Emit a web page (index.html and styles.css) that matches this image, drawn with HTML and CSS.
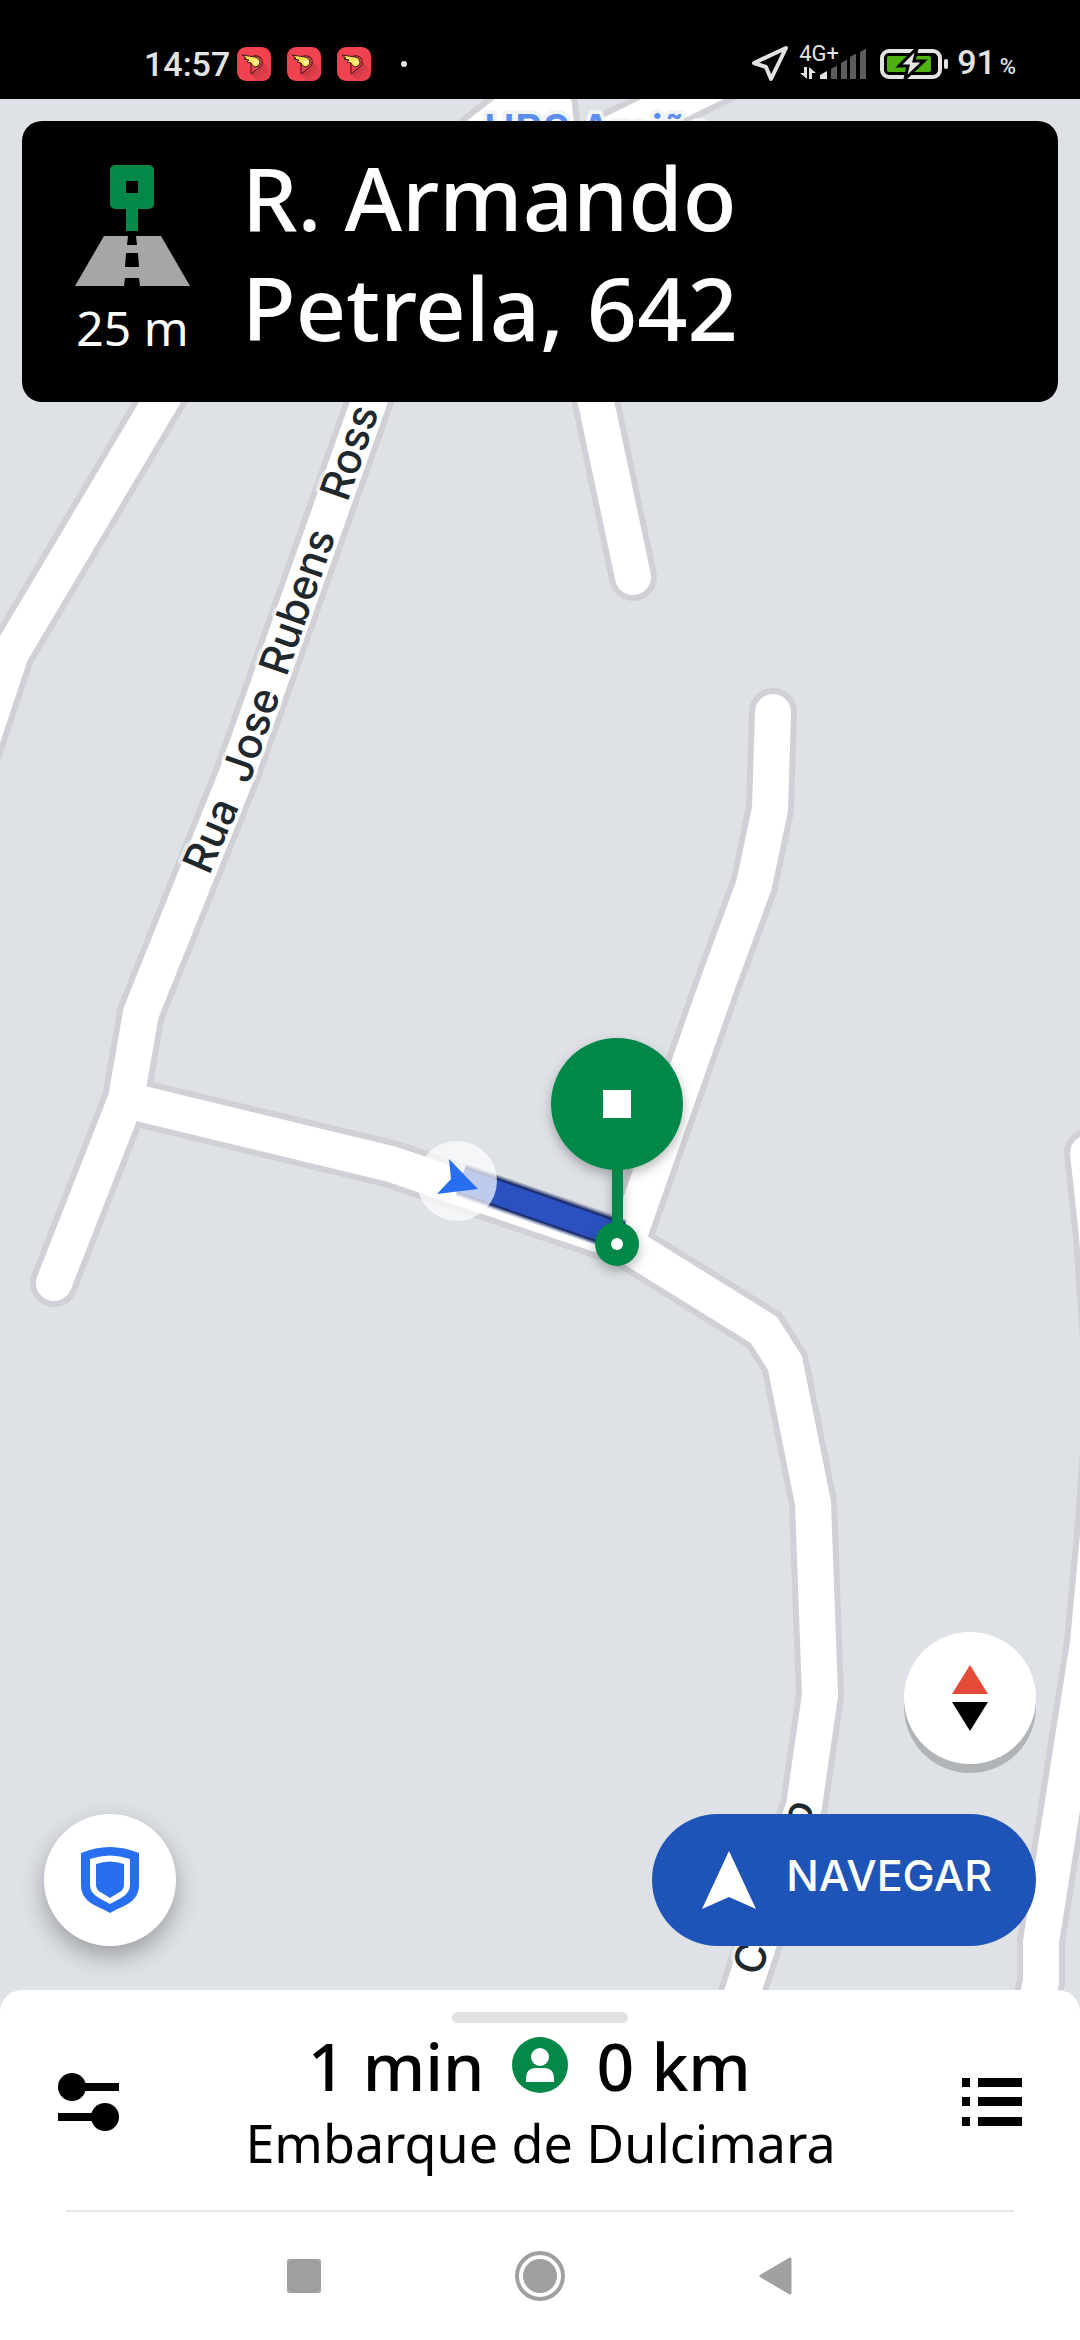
FILE: index.html
```html
<!DOCTYPE html>
<html lang="pt-BR">
<head>
<meta charset="utf-8">
<meta name="viewport" content="width=device-width, initial-scale=1">
<title>Navegação</title>
<link rel="stylesheet" href="styles.css">
</head>
<body>
<svg width="0" height="0" class="defs" aria-hidden="true">
  <defs>
    <linearGradient id="fade" x1="0" y1="0" x2="1" y2="1">
      <stop offset="0.2" stop-color="#a3303a"/>
      <stop offset="0.9" stop-color="#f0424f"/>
    </linearGradient>
    <symbol id="app" viewBox="0 0 34 34">
      <rect width="34" height="34" rx="9" fill="#f0424f"/>
      <path d="M23 12 L34 23 V27 Q33 34 25 34 H21 L14 27 Z" fill="url(#fade)" opacity="0.7"/>
      <path d="M14 13 V27 L24 19 Q27 14 23 10 Q20 8 16 9" fill="#f0424f" stroke="#37171b" stroke-width="1"/>
      <path d="M5 8 L18 10 Q23 11 23 16 Q22 20 18 20 Q15 19 14 16 L10 15 L12 13 L7 12 L9 11 Z" fill="#ffe55c" stroke="#37171b" stroke-width="1"/>
      <circle cx="19" cy="15" r="2" fill="#fff6a0"/>
    </symbol>
  </defs>
</svg>

<header class="status">
  <div class="status-left">
    <time class="clock">14:57</time>
    <div class="apps">
      <svg width="34" height="34"><use href="#app"/></svg>
      <svg width="34" height="34"><use href="#app"/></svg>
      <svg width="34" height="34"><use href="#app"/></svg>
    </div>
    <span class="more-dot"></span>
  </div>
  <div class="status-right">
    <svg class="locate" width="38" height="38" viewBox="0 0 38 38"><path d="M35 3 L3 18 L15 22 L20 34 Z" fill="none" stroke="#e3e3e3" stroke-width="4" stroke-linejoin="round"/></svg>
    <div class="signal">
      <span class="net">4G+</span>
      <svg width="68" height="32" viewBox="0 0 68 32">
        <g fill="#e3e3e3">
          <path d="M5 19h3v12l-7-6h4zM10 31v-12l7 6h-4v6z"/>
          <path d="M21 31v-4l7-4v8z"/>
        </g>
        <g fill="#5c5c5c">
          <path d="M32 31V21l5-3h1v13zM42 31V15l5-3h1v19zM51 31V9l5-3h1v25zM61 31V4l5-3h1v30z"/>
        </g>
      </svg>
    </div>
    <svg class="battery" width="69" height="32" viewBox="0 0 69 32">
      <rect x="2" y="3" width="58" height="26" rx="7" fill="none" stroke="#e3e3e3" stroke-width="4"/>
      <rect x="7" y="8" width="44" height="16" rx="2" fill="#4eb011"/>
      <rect x="64" y="11" width="4" height="10" rx="2" fill="#e3e3e3"/>
      <path d="M36 1 L19 18 H28 L25 31 L44 13 H34 L37 1 Z" fill="#e3e3e3" stroke="#000" stroke-width="3"/>
    </svg>
    <span class="percent">91<small>%</small></span>
  </div>
</header>

<main class="map">
  <svg class="tiles" viewBox="0 99 1080 1915" preserveAspectRatio="xMidYMin slice" role="img" aria-label="Mapa">
    <defs>
      <g id="roads">
        <path d="M172 382 L11 653 L-89 953"/>
        <path d="M376 382 L237 774 L141 1013 L126 1099 L54 1283"/>
        <path d="M126 1100 L391 1164 L624 1243 L764 1330 L785 1363 L813 1503 L820 1695 L804 1806 L730 2030"/>
        <path d="M773 712 L770 809 L754 885 L719 980 L626 1244"/>
        <path d="M551 80 L575 290 L596 402 L633 577"/>
        <path d="M478 135 L560 71"/>
        <path d="M566 156 L740 71"/>
        <path d="M1088 1153 L1097 1235 L1104 1340 L1104 1450 L1098 1535 L1088 1643 L1041 1942 L1041 1982 L1030 2030"/>
      </g>
      <path id="rua" d="M209 876 L250 782 L383 400 L397 360"/>
      <path id="cristiano" d="M759 1981 L813 1812 L822 1760"/>
      <filter id="drop" x="-30%" y="-30%" width="160%" height="160%">
        <feDropShadow dx="0" dy="5" stdDeviation="6" flood-color="#000" flood-opacity="0.28"/>
      </filter>
    </defs>
    <rect y="99" width="1080" height="1915" fill="#dee1e6"/>
    <use href="#roads" class="casing"/>
    <use href="#roads" class="surface"/>

    <text class="poi" x="484" y="145">UBS Areião</text>
    <text class="street"><textPath href="#rua" startOffset="0">Rua</textPath></text>
    <text class="street"><textPath href="#rua" startOffset="99">Jose</textPath></text>
    <text class="street"><textPath href="#rua" startOffset="213">Rubens</textPath></text>
    <text class="street"><textPath href="#rua" startOffset="398">Ross</textPath></text>
    <text class="street"><textPath href="#cristiano" startOffset="4">Cristiano</textPath></text>

    <g fill="none" stroke="#1b2f6e">
      <path d="M461 1180 L621 1236" stroke-width="34" opacity="0.25"/>
      <path d="M461 1180 L621 1236" stroke-width="31" opacity="0.5"/>
      <path d="M461 1180 L621 1236" stroke-width="28"/>
      <path d="M461 1180 L621 1236" stroke-width="24" stroke="#2b50bf"/>
    </g>
    <circle cx="457" cy="1181" r="40" fill="#fff" opacity="0.7"/>
    <path d="M449 1159 L478 1189 L437 1194 L451 1179 Z" fill="#276ef1"/>

    <g fill="#048848" filter="url(#drop)">
      <circle cx="617" cy="1104" r="66"/>
      <rect x="612" y="1160" width="11" height="70"/>
      <circle cx="617" cy="1244" r="22"/>
    </g>
    <rect x="603" y="1090" width="28" height="28" fill="#fff"/>
    <circle cx="617" cy="1244" r="6" fill="#fff"/>
  </svg>

  <section class="turn">
    <div class="turn-step">
      <svg width="115" height="121" viewBox="0 0 115 121" aria-hidden="true">
        <path fill="#048848" fill-rule="evenodd" d="M40 0h34a5 5 0 0 1 5 5v34a5 5 0 0 1-5 5H63v22H51V44H40a5 5 0 0 1-5-5V5a5 5 0 0 1 5-5zM51 16v12h12V16z"/>
        <path fill="#a6a6a6" fill-rule="evenodd" d="M29 71H86L115 121H65L64 113H50L49 121H0ZM53 71L52 80H62L61 71ZM51 88L50 102H64L63 88Z"/>
      </svg>
      <span class="distance">25 m</span>
    </div>
    <h1 class="street-name">R. Armando Petrela, 642</h1>
  </section>

  <div class="controls">
    <button class="round shield" aria-label="Segurança">
      <svg width="58" height="66" viewBox="0 0 58 66"><path fill="#276ef1" fill-rule="evenodd" d="M0 6Q29-6 58 6V38Q58 52 43 59Q34 63 29 66Q24 63 15 59Q0 52 0 38Z"/><path fill="#fff" d="M9 12Q29 5 49 12V38Q49 46 40 51L29 57L18 51Q9 46 9 38Z"/><path fill="#276ef1" d="M15 17Q29 12 43 17V38Q43 43 37 46L29 51L21 46Q15 43 15 38Z"/></svg>
    </button>
    <div class="controls-right">
      <button class="round compass" aria-label="Bússola">
        <svg width="36" height="66" viewBox="0 0 36 66"><path d="M18 0L36 29H0Z" fill="#e54937"/><path d="M0 37H36L18 66Z" fill="#000"/></svg>
      </button>
      <button class="navigate">
        <svg width="54" height="58" viewBox="0 0 54 58"><path d="M27 0L54 58L27 46L0 58Z" fill="#fff"/></svg>
        <span>NAVEGAR</span>
      </button>
    </div>
  </div>
</main>

<section class="sheet">
  <div class="handle"></div>
  <div class="trip">
    <button class="plain" aria-label="Preferências">
      <svg width="61" height="58" viewBox="0 0 61 58"><path d="M14 10h47v8H14zM0 40h47v8H0z"/><circle cx="14" cy="14" r="14"/><circle cx="47" cy="44" r="14"/></svg>
    </button>
    <div class="trip-info">
      <div class="eta">
        <span class="eta-time">1 min</span>
        <svg width="56" height="56" viewBox="0 0 56 56" aria-hidden="true"><circle cx="28" cy="28" r="28" fill="#048848"/><circle cx="28" cy="20" r="9" fill="#fff"/><path d="M14 45V42Q14 31 24 31H32Q42 31 42 42V45Z" fill="#fff"/></svg>
        <span>0 km</span>
      </div>
      <p class="rider">Embarque de Dulcimara</p>
    </div>
    <button class="plain" aria-label="Lista">
      <svg width="60" height="48" viewBox="0 0 60 48"><path d="M0 0h8v9H0zM16 0h44v9H16zM0 19h8v9H0zM16 19h44v9H16zM0 39h8v9H0zM16 39h44v9H16z"/></svg>
    </button>
  </div>
  <nav class="system">
    <button class="plain" aria-label="Recentes"><svg width="34" height="34"><rect width="34" height="34" rx="3" fill="#a0a0a0"/></svg></button>
    <button class="plain" aria-label="Início"><svg width="50" height="50"><circle cx="25" cy="25" r="23" fill="none" stroke="#a0a0a0" stroke-width="4"/><circle cx="25" cy="25" r="17" fill="#a0a0a0"/></svg></button>
    <button class="plain" aria-label="Voltar"><svg width="34" height="38"><path d="M2 19L31 2V36Z" fill="#a0a0a0" stroke="#a0a0a0" stroke-width="3" stroke-linejoin="round"/></svg></button>
  </nav>
</section>
</body>
</html>
```
FILE: styles.css
```css
* {
  box-sizing: border-box;
}

body {
  margin: 0;
  min-height: 100vh;
  display: flex;
  flex-direction: column;
  background: #dee1e6;
  color: #000;
  font-family: "Noto Sans", sans-serif;
}

svg {
  display: block;
  flex: none;
}

.defs {
  position: absolute;
}

button {
  border: 0;
  padding: 0;
  font: inherit;
  color: inherit;
  cursor: pointer;
}

/* status bar */

.status {
  display: flex;
  justify-content: space-between;
  padding: 44px 64px 15px 144px;
  background: #000;
  color: #e3e3e3;
  font-family: Roboto, sans-serif;
}

.status-left,
.status-right {
  display: flex;
  align-items: center;
  height: 40px;
}

.clock,
.percent {
  font-size: 34px;
  line-height: 40px;
  font-weight: 500;
}

.apps {
  display: flex;
  gap: 16px;
  margin-left: 7px;
}

.more-dot {
  width: 6px;
  height: 6px;
  margin-left: 30px;
  border-radius: 50%;
  background: #e3e3e3;
}

.locate {
  margin-right: 10px;
}

.signal {
  position: relative;
  margin-right: 13px;
}

.net {
  position: absolute;
  top: -6px;
  left: 0;
  font-size: 22px;
  line-height: 24px;
}

.battery {
  margin-right: 8px;
}

.percent small {
  margin-left: 4px;
  font-size: 22px;
}

/* map */

.map {
  position: relative;
  flex: 1;
  display: flex;
  flex-direction: column;
  justify-content: space-between;
}

.tiles {
  position: absolute;
  top: 0;
  left: 0;
  width: 100%;
  height: calc(100% + 24px);
}

.casing,
.surface {
  fill: none;
  stroke-linecap: round;
  stroke-linejoin: miter;
}

.casing {
  stroke: #d0d0d6;
  stroke-width: 48px;
}

.surface {
  stroke: #fff;
  stroke-width: 36px;
}

.street,
.poi {
  font-family: Inter, sans-serif;
  font-size: 42px;
  font-weight: 500;
  stroke-width: 8px;
  stroke-linejoin: round;
  paint-order: stroke;
}

.street {
  fill: #1f282d;
  stroke: rgba(255, 255, 255, 0.5);
}

.poi {
  font-weight: 600;
  fill: #5b8def;
  stroke: #f1f4f7;
}

.turn {
  position: relative;
  display: flex;
  gap: 52px;
  margin: 22px;
  padding: 21px 53px 40px;
  border-radius: 20px;
  background: #000;
  color: #fff;
}

.turn-step {
  display: flex;
  flex-direction: column;
  align-items: center;
  gap: 12px;
  padding-top: 23px;
}

.distance {
  font-size: 48px;
  line-height: 60px;
  margin-bottom: -20px;
}

.street-name {
  margin: 0;
  max-width: 560px;
  font-size: 88px;
  line-height: 110px;
  font-weight: 500;
}

.controls {
  position: relative;
  display: flex;
  justify-content: space-between;
  align-items: flex-end;
  padding: 44px;
}

.controls-right {
  display: flex;
  flex-direction: column;
  align-items: flex-end;
  gap: 50px;
}

.round {
  display: grid;
  place-items: center;
  width: 132px;
  height: 132px;
  border-radius: 50%;
  background: #fff;
}

.shield {
  box-shadow: 0 10px 24px rgba(0, 0, 0, 0.3);
}

.compass {
  box-shadow: 0 9px 0 #b0b4b7;
}

.navigate {
  display: flex;
  align-items: center;
  gap: 30px;
  height: 132px;
  padding: 0 44px 0 50px;
  border-radius: 66px;
  background: #1e54b7;
  color: #fff;
  font-family: Inter, sans-serif;
  font-size: 43px;
  line-height: 50px;
  font-weight: 500;
}

.navigate span {
  padding-bottom: 10px;
}

/* bottom sheet */

.sheet {
  position: relative;
  padding-top: 22px;
  border-radius: 22px 22px 0 0;
  background: #fff;
}

.handle {
  width: 176px;
  height: 11px;
  margin: 0 auto;
  border-radius: 6px;
  background: #e2e2e2;
}

.plain {
  background: none;
}

.trip {
  display: flex;
  align-items: center;
  justify-content: space-between;
  padding: 8px 58px 37px;
}

.trip-info {
  display: flex;
  flex-direction: column;
  gap: 14px;
}

.eta {
  display: grid;
  grid-template-columns: 1fr auto 1fr;
  align-items: center;
  gap: 28px;
  font-size: 66px;
  line-height: 68px;
  font-weight: 500;
}

.eta-time {
  text-align: right;
}

.rider {
  margin: 0;
  font-size: 52px;
  line-height: 60px;
  font-weight: 400;
}

.system {
  display: flex;
  align-items: center;
  justify-content: center;
  gap: 194px;
  height: 130px;
  margin: 0 66px;
  border-top: 2px solid #e6e6e6;
}
```
